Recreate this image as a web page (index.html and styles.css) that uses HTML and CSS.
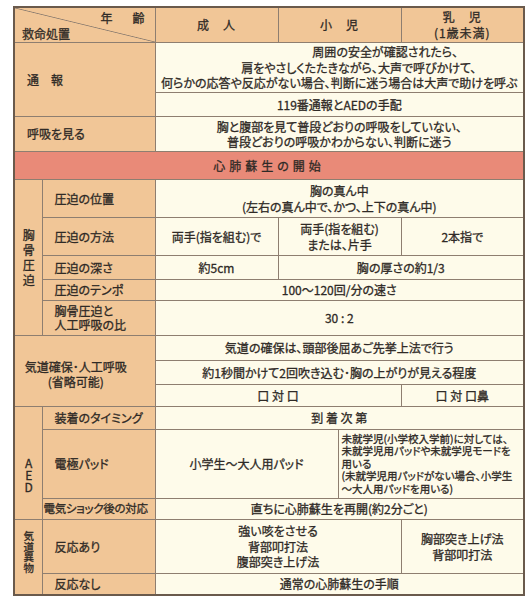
FILE: index.html
```
<!DOCTYPE html>
<html lang="ja">
<head>
<meta charset="utf-8">
<title>救命処置</title>
<link rel="stylesheet" href="styles.css">
</head>
<body>
<table class="chart">
  <colgroup>
    <col class="c1"><col class="c2"><col class="c3"><col class="c4"><col class="c5"><col class="c6">
  </colgroup>
  <tr class="h-head">
    <td colspan="2" class="lab diag"><div class="diag-in"><span class="age">年　齢</span><span class="act">救命処置</span></div></td>
    <td class="lab head">成　人</td>
    <td colspan="2" class="lab head">小　児</td>
    <td class="lab head">乳　児<br>(1歳未満)</td>
  </tr>
  <tr class="h-51">
    <td colspan="2" rowspan="2" class="lab main">通　報</td>
    <td colspan="4" class="dat"><span class="l1">周囲の安全が確認されたら、</span><br><span class="l2">肩をやさしくたたきながら、大声で呼びかけて、</span><br>何らかの応答や反応がない場合、判断に迷う場合は大声で助けを呼ぶ</td>
  </tr>
  <tr class="h-24">
    <td colspan="4" class="dat">119番通報とAEDの手配</td>
  </tr>
  <tr class="h-36">
    <td colspan="2" class="lab main">呼吸を見る</td>
    <td colspan="4" class="dat">胸と腹部を見て普段どおりの呼吸をしていない、<br>普段どおりの呼吸かわからない、判断に迷う</td>
  </tr>
  <tr class="h-28">
    <td colspan="6" class="band">心肺蘇生の開始</td>
  </tr>
  <tr class="h-38">
    <td rowspan="5" class="lab vcell chest"><span class="vtext">胸骨圧迫</span></td>
    <td class="lab sub">圧迫の位置</td>
    <td colspan="4" class="dat">胸の真ん中<br>(左右の真ん中で、かつ、上下の真ん中)</td>
  </tr>
  <tr class="h-39">
    <td class="lab sub">圧迫の方法</td>
    <td class="dat">両手(指を組む)で</td>
    <td colspan="2" class="dat">両手(指を組む)<br>または、片手</td>
    <td class="dat">2本指で</td>
  </tr>
  <tr class="h-24">
    <td class="lab sub">圧迫の深さ</td>
    <td class="dat">約5cm</td>
    <td colspan="3" class="dat">胸の厚さの約1/3</td>
  </tr>
  <tr class="h-21">
    <td class="lab sub">圧迫のテンポ</td>
    <td colspan="4" class="dat">100〜120回/分の速さ</td>
  </tr>
  <tr class="h-35">
    <td class="lab sub two">胸骨圧迫と<br>人工呼吸の比</td>
    <td colspan="4" class="dat">30 : 2</td>
  </tr>
  <tr class="h-25">
    <td colspan="2" rowspan="3" class="lab airway">気道確保･人工呼吸<br>(省略可能)</td>
    <td colspan="4" class="dat">気道の確保は、頭部後屈あご先挙上法で行う</td>
  </tr>
  <tr class="h-24">
    <td colspan="4" class="dat">約1秒間かけて2回吹き込む･胸の上がりが見える程度</td>
  </tr>
  <tr class="h-22">
    <td colspan="3" class="dat">口 対 口</td>
    <td class="dat">口 対 口鼻</td>
  </tr>
  <tr class="h-23">
    <td rowspan="3" class="lab vcell aed"><span class="vtext">AED</span></td>
    <td class="lab sub">装着のタイミング</td>
    <td colspan="4" class="dat">到 着 次 第</td>
  </tr>
  <tr class="h-70">
    <td class="lab sub">電極パッド</td>
    <td colspan="2" class="dat">小学生〜大人用パッド</td>
    <td colspan="2" class="dat note">未就学児(小学校入学前)に対しては、<br>未就学児用パッドや未就学児モードを<br>用いる<br>(未就学児用パッドがない場合、小学生<br>〜大人用パッドを用いる)</td>
  </tr>
  <tr class="h-21">
    <td class="lab sub tight">電気ショック後の対応</td>
    <td colspan="4" class="dat">直ちに心肺蘇生を再開(約2分ごと)</td>
  </tr>
  <tr class="h-55">
    <td rowspan="2" class="lab vcell obj"><span class="vtext">気道異物</span></td>
    <td class="lab sub">反応あり</td>
    <td colspan="3" class="dat">強い咳をさせる<br>背部叩打法<br>腹部突き上げ法</td>
    <td class="dat">胸部突き上げ法<br>背部叩打法</td>
  </tr>
  <tr class="h-21">
    <td class="lab sub">反応なし</td>
    <td colspan="4" class="dat">通常の心肺蘇生の手順</td>
  </tr>
</table>
</body>
</html>
```

FILE: styles.css
```
html, body {
  margin: 0;
  padding: 0;
  background: #ffffff;
}

body {
  font-family: "Noto Sans CJK JP", "Noto Sans", sans-serif;
  color: #2f2a26;
  font-size: 12px;
  font-feature-settings: "palt" 1;
  -webkit-text-stroke: 0.3px #2f2a26;
}

.chart {
  margin: 6px 0 0 13px;
  width: 510px;
  table-layout: fixed;
  border-collapse: collapse;
  border: 2px solid #6a5a4c;
}

.c1 { width: 28px; }
.c2 { width: 113px; }
.c3 { width: 123px; }
.c4 { width: 60px; }
.c5 { width: 63px; }
.c6 { width: 123px; }

td {
  border: 1px solid #8e7e70;
  padding: 0;
  text-align: center;
  vertical-align: middle;
  line-height: 15.5px;
}

.lab { background: #f1c697; }
.dat { background: #fefbea; }

.band {
  background: #e98a78;
  letter-spacing: 4px;
}

.head { line-height: 16px; letter-spacing: 1px; }

.h-head td { height: 34px; }
.h-51 td { height: 49px; }
.h-24 td { height: 23px; }
.h-36 td { height: 34px; }
.h-28 td { height: 27px; }
.h-38 td { height: 37px; }
.h-39 td { height: 37px; }
.h-21 td { height: 20px; }
.h-35 td { height: 34px; }
.h-25 td { height: 24px; }
.h-22 td { height: 21px; }
.h-23 td { height: 22px; }
.h-70 td { height: 68px; }
.h-55 td { height: 53px; }

.diag {
  background: linear-gradient(to top right, #f1c697 calc(50% - 0.8px), #8e7e70 50%, #f1c697 calc(50% + 0.8px));
}

.diag-in {
  display: flex;
  flex-direction: column;
  justify-content: space-between;
  height: 34px;
  padding: 3px 0 1px 7px;
  box-sizing: border-box;
  line-height: 14px;
}

.age {
  align-self: flex-end;
  margin-right: 6px;
  letter-spacing: 4px;
}

.act { align-self: flex-start; }

.main {
  text-align: left;
  padding-left: 12px;
}

.sub {
  text-align: left;
  padding-left: 12px;
}

.sub.two { line-height: 14px; }

.sub.tight {
  padding-left: 1px;
  font-size: 11.5px;
  letter-spacing: -0.3px;
  white-space: nowrap;
}

.airway {
  padding-right: 18px;
  padding-top: 6px;
  line-height: 15px;
}

.vtext {
  display: inline-block;
  writing-mode: vertical-rl;
  text-orientation: upright;
  line-height: 16px;
}

.chest .vtext { letter-spacing: 3px; }
.chest { padding-top: 6px; }

.aed .vtext { letter-spacing: 0; }
.aed { padding-top: 26px; }

.obj .vtext { font-size: 10.5px; letter-spacing: 0; }
.obj { padding-bottom: 8px; }

.l1 { padding-left: 92px; }
.l2 { padding-left: 39px; }

.note {
  text-align: left;
  padding-left: 3px;
  font-size: 10.5px;
  line-height: 12.5px;
}
```
